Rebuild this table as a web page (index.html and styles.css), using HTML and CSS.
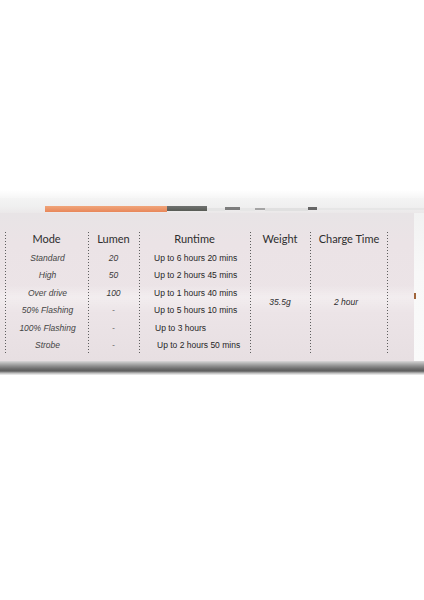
FILE: index.html
```html
<!DOCTYPE html>
<html>
<head>
<meta charset="utf-8">
<link rel="stylesheet" href="styles.css">
</head>
<body>
<div class="page">
  <div class="top-space"></div>
  <div class="lip">
    <span class="seg s-blank1"></span>
    <span class="seg s-orange"></span>
    <span class="seg s-dark"></span>
    <span class="seg s-light"></span>
    <span class="seg s-dark2"></span>
    <span class="seg s-light2"></span>
    <span class="seg s-dark4"></span>
    <span class="seg s-light3"></span>
    <span class="seg s-dark3"></span>
    <span class="seg s-rest"></span>
  </div>
  <div class="body-row">
    <div class="panel">
      <div class="table">
        <div class="col c-mode">
          <div class="th">Mode</div>
          <div class="td">Standard</div>
          <div class="td">High</div>
          <div class="td">Over drive</div>
          <div class="td">50% Flashing</div>
          <div class="td">100% Flashing</div>
          <div class="td">Strobe</div>
        </div>
        <div class="col c-lumen">
          <div class="th">Lumen</div>
          <div class="td">20</div>
          <div class="td">50</div>
          <div class="td">100</div>
          <div class="td">-</div>
          <div class="td">-</div>
          <div class="td">-</div>
        </div>
        <div class="col c-run">
          <div class="th">Runtime</div>
          <div class="td">Up to 6 hours 20 mins</div>
          <div class="td">Up to 2 hours 45 mins</div>
          <div class="td">Up to 1 hours 40 mins</div>
          <div class="td">Up to 5 hours 10 mins</div>
          <div class="td r5">Up to 3 hours</div>
          <div class="td r6">Up to 2 hours 50 mins</div>
        </div>
        <div class="col c-weight">
          <div class="th">Weight</div>
          <div class="span-cell">35.5g</div>
        </div>
        <div class="col c-charge">
          <div class="th">Charge Time</div>
          <div class="span-cell">2 hour</div>
        </div>
      </div>
    </div>
    <div class="side">
      <span class="mark"></span>
    </div>
  </div>
  <div class="rim"></div>
</div>
</body>
</html>
```
FILE: styles.css
```css
html, body {
  margin: 0;
  padding: 0;
  background: #ffffff;
}

.page {
  width: 424px;
  height: 600px;
  display: flex;
  flex-direction: column;
  background: #ffffff;
}

.top-space {
  height: 198px;
  background: linear-gradient(to bottom, #ffffff 0, #ffffff 190px, #f6f6f6 198px);
}

.lip {
  height: 15px;
  display: flex;
  background: linear-gradient(to bottom, #f4f4f4 0, #f0f0f0 8px, #ebe8e9 15px);
}

.seg {
  display: block;
  height: 6px;
  margin-top: 8px;
}

.s-blank1 { width: 45px; height: 0; }
.s-orange { width: 122px; background: linear-gradient(to bottom, #f0a57a, #e8875a); }
.s-dark { width: 40px; background: linear-gradient(to bottom, #707270, #585b55); height: 5px; margin-top: 8px; }
.s-light { width: 18px; background: #e4e4e4; height: 3px; margin-top: 10px; }
.s-dark2 { width: 15px; background: #7d7d7d; height: 3px; margin-top: 9px; }
.s-light2 { width: 15px; background: #e6e6e6; height: 3px; margin-top: 10px; }
.s-dark4 { width: 10px; background: #a4a4a4; height: 2px; margin-top: 10px; }
.s-light3 { width: 43px; background: #e0e0e0; height: 3px; margin-top: 10px; }
.s-dark3 { width: 9px; background: #666666; height: 3px; margin-top: 9px; }
.s-rest { flex: 1; background: #e6e6e6; height: 2px; margin-top: 10px; }

.body-row {
  height: 148px;
  display: flex;
}

.panel {
  width: 414px;
  background:
    linear-gradient(to bottom, rgba(255,255,255,0) 0, rgba(255,255,255,0) 72px, rgba(255,255,255,0.35) 84px, rgba(255,255,255,0) 100px),
    linear-gradient(to bottom, #e8e4e6 0, #ebe3e6 30px, #ece4e7 100px, #e7dfe2 148px);
  padding-top: 19px;
  box-sizing: border-box;
}

.side {
  flex: 1;
  background: linear-gradient(to bottom, #f2f2f2 0, #f8f8f8 60px, #fafafa 148px);
  position: relative;
}

.mark {
  position: absolute;
  left: 0;
  top: 80px;
  width: 2px;
  height: 6px;
  background: #a0643a;
}

.table {
  margin-left: 5px;
  display: grid;
  grid-template-columns: 83px 51px 111px 60px 78px;
  height: 121px;
}

.col {
  display: flex;
  flex-direction: column;
  background-image: linear-gradient(to bottom, #5e5e5e 50%, rgba(0,0,0,0) 50%);
  background-size: 1px 3px;
  background-repeat: repeat-y;
  background-position: left top;
}

.c-charge {
  background-image:
    linear-gradient(to bottom, #5e5e5e 50%, rgba(0,0,0,0) 50%),
    linear-gradient(to bottom, #5e5e5e 50%, rgba(0,0,0,0) 50%);
  background-size: 1px 3px, 1px 3px;
  background-repeat: repeat-y, repeat-y;
  background-position: left top, right top;
}

.th {
  height: 13px;
  line-height: 13px;
  margin-bottom: 5px;
  text-align: center;
  font-family: "Lato", "Noto Sans", sans-serif;
  font-size: 11px;
  color: #2e2e2e;
}

.td {
  height: 17.4px;
  line-height: 17.4px;
  font-family: "Liberation Sans", Arial, sans-serif;
  font-size: 8.5px;
  color: #333333;
  white-space: nowrap;
}

.c-mode .td {
  text-align: center;
  font-style: italic;
  color: #444444;
  padding-left: 2px;
}

.c-lumen .td {
  text-align: center;
  font-style: italic;
  color: #3a3a3a;
}

.c-run .td {
  text-align: left;
  padding-left: 15px;
  color: #262626;
}

.c-run .r5 { padding-left: 16px; }
.c-run .r6 { padding-left: 18px; }

.span-cell {
  height: 104.4px;
  display: flex;
  align-items: center;
  justify-content: center;
  font-family: "Liberation Sans", Arial, sans-serif;
  font-style: italic;
  font-size: 8.5px;
  color: #2e2e2e;
}

.c-charge .span-cell {
  padding-right: 6px;
}

.rim {
  height: 14px;
  background: linear-gradient(to bottom, #d9d6d8 0, #b9b9b9 2px, #8f8f8f 5px, #6a6a6a 8px, #5d5d5d 10px, #b8b8b8 12px, #f4f4f4 14px);
}
```
